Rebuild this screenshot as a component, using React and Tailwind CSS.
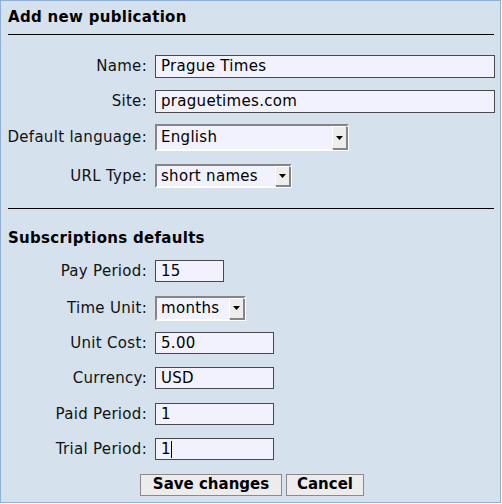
const font = { fontFamily: '"DejaVu Sans", "Liberation Sans", sans-serif' };

const TextBox = ({ value, width, height = "h-[23px]", cursor }) => (
  <div
    className={`${width} ${height} flex items-center border border-[#4a4a4a] bg-[#f2f2ff] pl-[5px] text-[15px] text-black`}
  >
    <span>{value}</span>
    {cursor && <span className="h-[17px] border-l border-black" />}
  </div>
);

const SelectBox = ({ value, width, height }) => (
  <div
    className={`${width} ${height} flex items-stretch border-2 border-t-[#858585] border-l-[#858585] border-r-white border-b-white bg-[#f2f2ff] text-[15px] text-black`}
  >
    <span className="flex flex-1 items-center pl-[4px] whitespace-nowrap">{value}</span>
    <span className="flex w-[15px] items-center justify-center border border-t-white border-l-white border-r-[#858585] border-b-[#858585] bg-[#ededed] shadow-[1px_1px_0_#858585]">
      <svg width="7" height="4" viewBox="0 0 7 4">
        <polygon points="0,0 7,0 3.5,4" fill="#000" />
      </svg>
    </span>
  </div>
);

const Row = ({ label, mt, children }) => (
  <div className={`flex items-center ${mt}`}>
    <div className="flex w-[139px] shrink-0 justify-end">
      <span className="whitespace-nowrap text-[15px] text-[#111]">{label}</span>
    </div>
    <div className="ml-[8px]">{children}</div>
  </div>
);

export default function App() {
  return (
    <div
      style={font}
      className="w-[501px] h-[503px] border border-[#8fb0d6] bg-[#d5e2ee] tracking-[0.3px]"
    >
      <div className="pl-[7px] pt-[7px]">
        <div className="h-[18px] leading-[18px] text-[15px] font-bold text-black">
          Add new publication
        </div>
        <div className="mt-[8px] h-px w-[486px] bg-black" />

        <Row label="Name:" mt="mt-[20px]">
          <TextBox value="Prague Times" width="w-[340px]" />
        </Row>
        <Row label="Site:" mt="mt-[12px]">
          <TextBox value="praguetimes.com" width="w-[340px]" />
        </Row>
        <Row label="Default language:" mt="mt-[11px]">
          <SelectBox value="English" width="w-[194px]" height="h-[27px]" />
        </Row>
        <Row label="URL Type:" mt="mt-[13px]">
          <SelectBox value="short names" width="w-[137px]" height="h-[24px]" />
        </Row>

        <div className="mt-[20px] h-px w-[486px] bg-black" />
        <div className="mt-[20px] h-[18px] leading-[18px] text-[15px] font-bold text-black">
          Subscriptions defaults
        </div>

        <Row label="Pay Period:" mt="mt-[13px]">
          <TextBox value="15" width="w-[69px]" height="h-[22px]" />
        </Row>
        <Row label="Time Unit:" mt="mt-[13px]">
          <SelectBox value="months" width="w-[91px]" height="h-[25px]" />
        </Row>
        <Row label="Unit Cost:" mt="mt-[11px]">
          <TextBox value="5.00" width="w-[119px]" height="h-[22px]" />
        </Row>
        <Row label="Currency:" mt="mt-[13px]">
          <TextBox value="USD" width="w-[119px]" height="h-[22px]" />
        </Row>
        <Row label="Paid Period:" mt="mt-[13px]">
          <TextBox value="1" width="w-[119px]" height="h-[22px]" />
        </Row>
        <Row label="Trial Period:" mt="mt-[13px]">
          <TextBox value="1" width="w-[119px]" height="h-[22px]" cursor />
        </Row>

        <div className="mt-[13px] flex gap-[4px] pl-[132px] tracking-normal">
          <button className="h-[22px] w-[142px] whitespace-nowrap border border-[#8a8a8a] bg-[#ececec] text-[15px] font-bold leading-none text-black">
            Save changes
          </button>
          <button className="h-[22px] w-[78px] border border-[#8a8a8a] bg-[#ececec] text-[15px] font-bold leading-none text-black">
            Cancel
          </button>
        </div>
      </div>
    </div>
  );
}
